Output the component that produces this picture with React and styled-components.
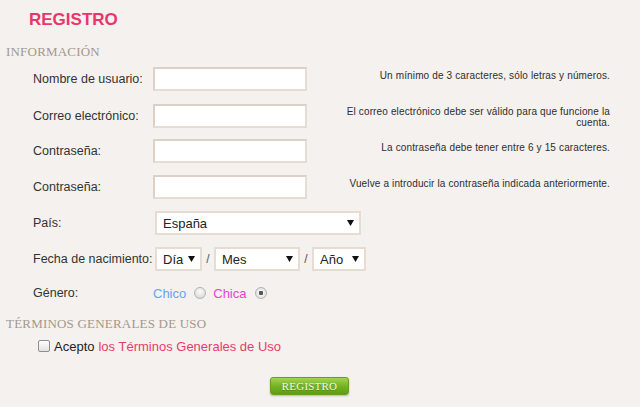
import React from 'react';
import styled, { createGlobalStyle } from 'styled-components';

const GlobalStyle = createGlobalStyle`
  html, body {
    margin: 0;
    padding: 0;
    background: #f4f1ee;
  }
  body {
    font-family: "Liberation Sans", Arial, sans-serif;
    color: #333;
  }
`;

function Arrow() {
  return (
    <svg width="7" height="6" viewBox="0 0 7 6">
      <polygon points="0,0 7,0 3.5,6" fill="#111" />
    </svg>
  );
}

function Dropdown({ width, value }) {
  return (
    <SelectWrap $width={width}>
      <Select defaultValue={value}>
        <option value={value}>{value}</option>
      </Select>
      <ArrowBox>
        <Arrow />
      </ArrowBox>
    </SelectWrap>
  );
}

function App() {
  return (
    <Page>
      <GlobalStyle />
      <Title>REGISTRO</Title>

      <SectionHeading>INFORMACIÓN</SectionHeading>
      <Fields>
        <Row>
          <Label>Nombre de usuario:</Label>
          <TextInput type="text" />
          <Hint>Un mínimo de 3 caracteres, sólo letras y números.</Hint>
        </Row>
        <Row>
          <Label>Correo electrónico:</Label>
          <TextInput type="text" />
          <Hint>
            El correo electrónico debe ser válido para que funcione la
            <br />
            cuenta.
          </Hint>
        </Row>
        <Row>
          <Label>Contraseña:</Label>
          <TextInput type="password" />
          <Hint>La contraseña debe tener entre 6 y 15 caracteres.</Hint>
        </Row>
        <Row>
          <Label>Contraseña:</Label>
          <TextInput type="password" />
          <Hint>Vuelve a introducir la contraseña indicada anteriormente.</Hint>
        </Row>
        <Row>
          <Label>País:</Label>
          <FieldGroup>
            <Dropdown width={206} value="España" />
          </FieldGroup>
        </Row>
        <Row>
          <Label>Fecha de nacimiento:</Label>
          <FieldGroup>
            <Dropdown width={47} value="Día" />
            <Slash>/</Slash>
            <Dropdown width={86} value="Mes" />
            <Slash>/</Slash>
            <Dropdown width={54} value="Año" />
          </FieldGroup>
        </Row>
        <Row $short>
          <Label>Género:</Label>
          <GenderGroup>
            <GenderText $color="#6aa2f2">Chico</GenderText>
            <Radio type="radio" name="genero" />
            <GenderText $color="#e443d6">Chica</GenderText>
            <Radio type="radio" name="genero" defaultChecked />
          </GenderGroup>
        </Row>
      </Fields>

      <SectionHeading $top={14}>TÉRMINOS GENERALES DE USO</SectionHeading>
      <TermsRow>
        <Checkbox type="checkbox" />
        <span>Acepto</span>
        <TermsLink href="#">los Términos Generales de Uso</TermsLink>
      </TermsRow>

      <ButtonRow>
        <SubmitButton type="button">REGISTRO</SubmitButton>
      </ButtonRow>
    </Page>
  );
}

const Page = styled.div`
  width: 640px;
  height: 407px;
  overflow: hidden;
  display: flex;
  flex-direction: column;
`;

const Title = styled.h1`
  margin: 11px 0 0 29px;
  font-family: "Liberation Sans", Arial, sans-serif;
  font-weight: 700;
  font-size: 17px;
  line-height: 17px;
  color: #ea356c;
`;

const SectionHeading = styled.h2`
  margin: ${(p) => p.$top ?? 17}px 0 0 6px;
  font-family: "Liberation Serif", "Times New Roman", serif;
  font-weight: 400;
  font-size: 13px;
  line-height: 13px;
  color: #a6978b;
  letter-spacing: 0.2px;
`;

const Fields = styled.div`
  display: flex;
  flex-direction: column;
  gap: 12px;
  margin-top: 9px;
  padding: 0 30px 0 33px;
`;

const Row = styled.div`
  display: grid;
  grid-template-columns: 120px auto 1fr;
  align-items: center;
  height: ${(p) => (p.$short ? 20 : 24)}px;
`;

const Label = styled.label`
  font-size: 12.5px;
  color: #333;
`;

const TextInput = styled.input`
  box-sizing: border-box;
  width: 154px;
  height: 24px;
  margin: 0;
  background: #fff;
  border: 2px solid #e6dcd2;
  border-top-color: #ddd0c4;
  border-left-color: #ddd0c4;
  outline: none;
`;

const Hint = styled.div`
  align-self: start;
  justify-self: end;
  margin-top: 3px;
  text-align: right;
  font-size: 10px;
  line-height: 11px;
  letter-spacing: 0.14px;
  color: #2e2e2e;
`;

const FieldGroup = styled.div`
  display: flex;
  align-items: center;
  padding-left: 2px;
`;

const SelectWrap = styled.div`
  position: relative;
  width: ${(p) => p.$width}px;
  height: 24px;
`;

const Select = styled.select`
  appearance: none;
  box-sizing: border-box;
  width: 100%;
  height: 100%;
  margin: 0;
  padding: 0 14px 0 6px;
  background: #fff;
  border: 2px solid #e6dcd2;
  border-radius: 0;
  font-family: "Liberation Sans", Arial, sans-serif;
  font-size: 13px;
  color: #222;
  outline: none;
`;

const ArrowBox = styled.span`
  position: absolute;
  right: 7px;
  top: 9px;
  display: flex;
  pointer-events: none;
`;

const Slash = styled.span`
  width: 12px;
  text-align: center;
  font-size: 12px;
  color: #555;
`;

const GenderGroup = styled.div`
  display: flex;
  align-items: center;
`;

const GenderText = styled.span`
  font-size: 13px;
  color: ${(p) => p.$color};
  margin-right: 8px;
`;

const Radio = styled.input`
  appearance: none;
  box-sizing: border-box;
  width: 12px;
  height: 12px;
  margin: 0 7px 0 0;
  border-radius: 50%;
  border: 1px solid #b3b3b3;
  background: radial-gradient(circle at 50% 35%, #fafafa, #d4d4d4);

  &:checked {
    background: radial-gradient(circle, #555 0 2px, #f2f2f2 2.5px, #d6d6d6 100%);
  }
`;

const TermsRow = styled.div`
  display: flex;
  align-items: center;
  height: 16px;
  margin-top: 8px;
  padding-left: 38px;
  font-size: 13px;
  color: #222;
  gap: 4px;
`;

const Checkbox = styled.input`
  appearance: none;
  box-sizing: border-box;
  width: 12px;
  height: 12px;
  margin: 0 0 1px 0;
  border: 1px solid #8f8f8f;
  border-radius: 2px;
  background: linear-gradient(#ffffff, #e2e2e2);
`;

const TermsLink = styled.a`
  color: #ea3a6c;
  text-decoration: none;
`;

const ButtonRow = styled.div`
  display: flex;
  margin-top: 23px;
  padding-left: 270px;
`;

const SubmitButton = styled.button`
  width: 79px;
  height: 18px;
  padding: 0;
  border: 1px solid #6a9e1e;
  border-radius: 3px;
  background: linear-gradient(#a3d356, #76b325 50%, #5e9c12);
  box-shadow: 0 1px 2px rgba(0, 0, 0, 0.25);
  font-family: "Liberation Serif", "Times New Roman", serif;
  font-size: 11px;
  line-height: 16px;
  color: #f4fbe4;
  letter-spacing: 0.2px;
  text-shadow: 0 1px 0 rgba(60, 100, 10, 0.5);
  cursor: pointer;
`;

export default App;
